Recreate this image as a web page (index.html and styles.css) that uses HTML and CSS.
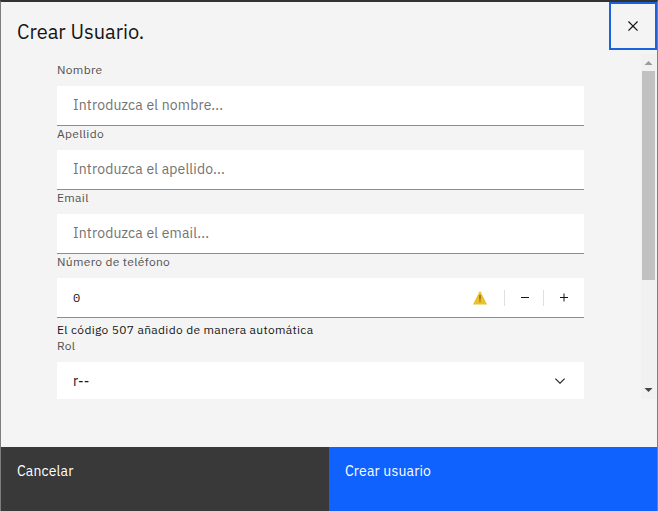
FILE: index.html
```html
<!DOCTYPE html>
<html lang="es">
<head>
<meta charset="utf-8">
<title>Crear Usuario</title>
<link rel="stylesheet" href="styles.css">
</head>
<body>
<main class="modal">
  <header class="header">
    <h1 class="title">Crear Usuario.</h1>
    <button class="close" aria-label="Cerrar">
      <svg width="20" height="20" viewBox="0 0 32 32"><path fill="#161616" d="M24 9.4L22.6 8 16 14.6 9.4 8 8 9.4l6.600 6.600L8 22.600 9.400 24l6.600-6.600 6.600 6.600 1.400-1.400-6.600-6.600z"/></svg>
    </button>
  </header>
  <div class="body">
    <form class="form">
      <label class="label">Nombre</label>
      <div class="input placeholder">Introduzca el nombre...</div>
      <label class="label">Apellido</label>
      <div class="input placeholder">Introduzca el apellido...</div>
      <label class="label">Email</label>
      <div class="input placeholder">Introduzca el email...</div>
      <label class="label">Número de teléfono</label>
      <div class="input number">
        <span class="value">0</span>
        <svg class="warning" width="16" height="16" viewBox="0 0 16 16"><path fill="#eac12b" d="M7.500 1.500h1L15 14.500H1z"/><path fill="#6b5814" d="M7.400 5h1.200v4.500H7.400zM7.400 10.500h1.200v1.200H7.400z"/></svg>
        <span class="step"><svg width="16" height="16" viewBox="0 0 32 32"><path fill="#161616" d="M8 14h16v2H8z"/></svg></span>
        <span class="step"><svg width="16" height="16" viewBox="0 0 32 32"><path fill="#161616" d="M17 14V7h-2v7H8v2h7v7h2v-7h7v-2z"/></svg></span>
      </div>
      <p class="helper">El código 507 añadido de manera automática</p>
      <label class="label">Rol</label>
      <div class="input select">
        <span>r--</span>
        <svg width="16" height="16" viewBox="0 0 16 16"><path fill="#161616" d="M8 11L3 6l.7-.7L8 9.600l4.300-4.300.7.7z"/></svg>
      </div>
    </form>
    <div class="scrollbar">
      <svg class="arrow" width="15" height="15" viewBox="0 0 15 15"><path fill="#9a9a9a" d="M3.500 11L7.500 7l4 4z"/></svg>
      <div class="thumb"></div>
      <svg class="arrow arrow-down" width="15" height="15" viewBox="0 0 15 15"><path fill="#444" d="M3.500 6h8l-4 4z"/></svg>
    </div>
  </div>
  <footer class="footer">
    <button class="btn cancel">Cancelar</button>
    <button class="btn submit">Crear usuario</button>
  </footer>
</main>
</body>
</html>
```
FILE: styles.css
```css
* { box-sizing: border-box; }
body {
  margin: 0;
  font-family: "IBM Plex Sans", Roboto, sans-serif;
  color: #161616;
}
.modal {
  display: flex;
  flex-direction: column;
  height: 511px;
  background: #f4f4f4;
  border: 1px solid #7d7d7d;
  border-top: 2px solid #333132;
  border-bottom: 0;
  overflow: hidden;
}
.header {
  display: flex;
  justify-content: space-between;
  height: 52px;
}
.title {
  margin: 16px 0 0 16px;
  font-size: 20px;
  line-height: 28px;
  font-weight: 400;
  letter-spacing: 0;
}
.close {
  display: grid;
  place-items: center;
  width: 48px;
  height: 48px;
  padding: 0;
  border: 2px solid #1b62dd;
  background: #f4f4f4;
}
.body {
  display: flex;
  justify-content: space-between;
  height: 345px;
  overflow: hidden;
}
.form { width: 527px; margin-left: 56px; padding-top: 8px; }
.label, .helper {
  display: block;
  margin: 0 0 8px;
  font-size: 12px;
  line-height: 16px;
  letter-spacing: 0.32px;
  color: #525252;
}
.helper { margin: 4px 0 0; color: #161616; }
.input {
  display: flex;
  align-items: center;
  height: 40px;
  padding: 0 16px 1px;
  background: #fff;
  border-bottom: 1px solid #8d8d8d;
  font-size: 14px;
  line-height: 18px;
  letter-spacing: 0.16px;
}
.placeholder { color: #737373; }
.number { padding: 0 1px 0 16px; }
.value {
  flex: 1;
  padding-top: 1px;
  font-family: "IBM Plex Mono", "Liberation Mono", monospace;
  font-size: 12px;
}
.warning { margin-right: 16px; }
.step {
  display: grid;
  place-items: center;
  width: 40px;
  height: 16px;
  border-left: 1px solid #e0e0e0;
}
.step + .step { width: 40px; margin-left: -1px; }
.select { justify-content: space-between; }
.scrollbar {
  width: 15px;
  display: flex;
  flex-direction: column;
  margin-right: 1px;
  background: #f1f1f1;
}
.thumb { width: 13px; height: 209px; margin: 2px 0 0 1px; background: #c1c1c1; }
.arrow { flex: none; }
.arrow-down { margin: auto 0 2px; }
.footer { display: flex; margin-top: auto; height: 64px; }
.btn {
  display: flex;
  flex: 1;
  padding: 15px 16px;
  border: 0;
  color: #fff;
  font: 400 14px/18px "IBM Plex Sans", Roboto, sans-serif;
  letter-spacing: 0.16px;
}
.cancel { background: #393939; }
.submit { background: #0f62fe; }
```
